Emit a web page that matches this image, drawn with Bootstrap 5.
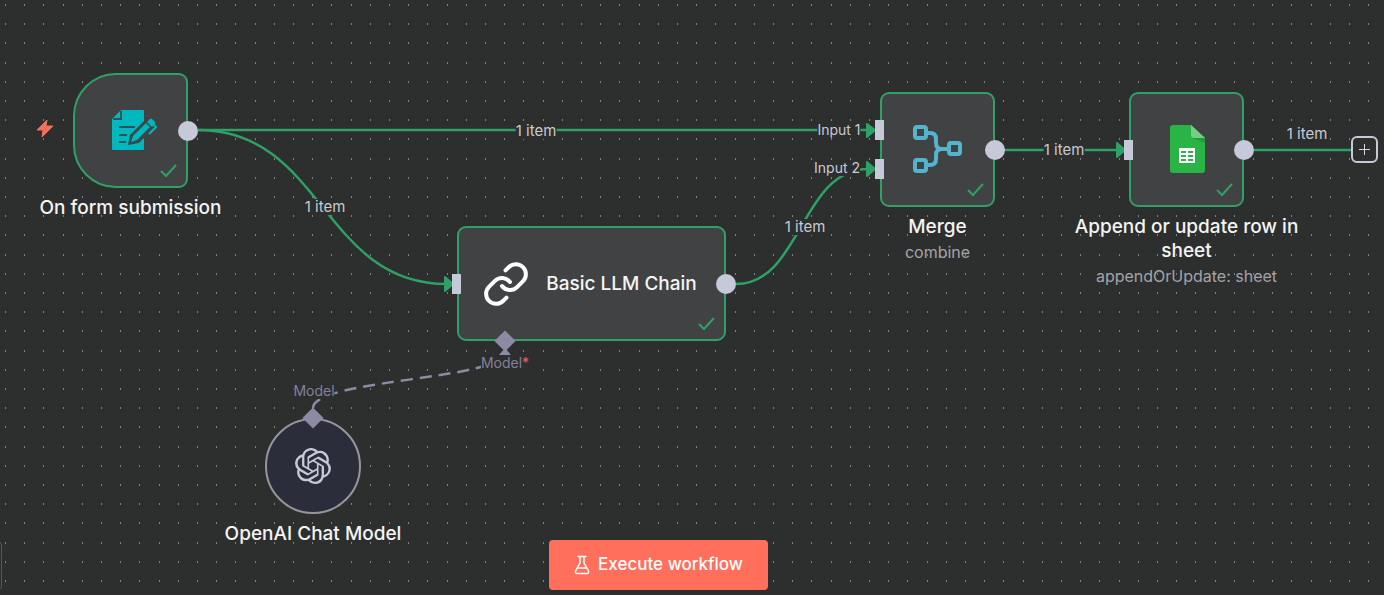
<!DOCTYPE html>
<html lang="en">
<head>
<meta charset="utf-8">
<meta name="viewport" content="width=device-width, initial-scale=1">
<title>Workflow</title>
<link rel="stylesheet" href="https://cdn.jsdelivr.net/npm/bootstrap@5.3.0/dist/css/bootstrap.min.css">
<style>
:root {
  --canvas: #2d2e2e;
  --node: #414244;
  --ok: #31a067;
  --port: #c5c9d8;
  --sub: #8c8ba3;
}
body { background: var(--canvas); color: #f4f4f6; font-family: Inter, "Liberation Sans", sans-serif; }
.flow-canvas { min-height: 595px; }
.wires { pointer-events: none; }
.flow-node { position: absolute; width: 115px; height: 115px; }
.node-face { background: var(--node); border: 2px solid var(--ok); border-radius: 9px; }
.node-trigger .node-face { border-radius: 43px 9px 9px 43px; }
.node-wide { width: 269px; }
.node-round { width: 96px; height: 96px; }
.node-round .node-face { background: #2b2d3b; border-color: #96969c; border-radius: 50%; }
.node-caption { position: absolute; top: 100%; left: 50%; width: 250px; transform: translateX(-50%); padding-top: 8px; text-align: center; }
.node-title { font-size: 19px; line-height: 24px; font-weight: 550; }
.node-note { font-size: 16px; line-height: 26px; color: #a3a4a9; }
.tick { position: absolute; right: 10px; bottom: 10px; }
.port { position: absolute; background: var(--port); }
.port-out { width: 20px; height: 20px; border-radius: 50%; right: -10px; top: 50%; transform: translateY(-50%); }
.port-in { width: 9px; height: 20px; left: -5px; top: 50%; transform: translateY(-50%); }
.port-first { top: 33%; }
.port-second { top: 67%; }
.port-sub { width: 15px; height: 15px; background: var(--sub); transform: translate(-50%, -50%) rotate(45deg); }
.wire-tag { position: absolute; transform: translate(-50%, -50%); background: var(--canvas); color: #c9cad2; font-size: 15px; line-height: 16px; white-space: nowrap; }
.wire-tag.port-tag { font-size: 14px; }
.wire-tag.sub-tag { color: #83819a; }
.need { color: #ff5a5a; }
.bolt { position: absolute; left: 36px; top: 119px; }
.add-next { position: absolute; left: 1351px; top: 136px; width: 27px; height: 27px; border: 2px solid var(--port); border-radius: 6px; background: var(--canvas); }
.run-bar { padding: 0 67px 5px 0; }
.btn-run { --bs-btn-bg: #ff6f5c; --bs-btn-color: #fff; --bs-btn-hover-bg: #f9614d; --bs-btn-hover-color: #fff; --bs-btn-border-width: 0; --bs-btn-border-radius: 4px; width: 219px; height: 50px; font-size: 17px; font-weight: 500; }
.edge-panel { position: absolute; left: -8px; bottom: 5px; width: 10px; height: 49px; border: 1px solid #555657; border-radius: 4px; }
</style>
</head>
<body>
<main class="flow-canvas position-relative vh-100 overflow-hidden d-flex flex-column justify-content-end">
  <svg class="wires position-absolute top-0 start-0 w-100 h-100" aria-hidden="true">
    <defs>
      <pattern id="dots" width="96" height="96" patternUnits="userSpaceOnUse">
        <g id="dotrow" fill="#808181">
          <rect x="5" y="4" width="1" height="2"/><rect x="24" y="4" width="1" height="2"/><rect x="43" y="4" width="1" height="2"/><rect x="63" y="4" width="1" height="2"/><rect x="82" y="4" width="1" height="2"/>
        </g>
        <use href="#dotrow" y="19"/><use href="#dotrow" y="38"/><use href="#dotrow" y="58"/><use href="#dotrow" y="77"/>
      </pattern>
    </defs>
    <rect width="100%" height="100%" fill="url(#dots)"/>
    <g fill="none" stroke="#2fa066" stroke-width="2.500">
      <path d="M198 130H868"/>
      <path d="M198 130C323 130 322 284 447 284"/>
      <path d="M736 284C801 284 801 169 868 169"/>
      <path d="M1004 150H1118"/>
      <path d="M1254 150H1352"/>
    </g>
    <g fill="#2fa066" stroke="#2fa066" stroke-width="2" stroke-linejoin="round">
      <path d="M867 124L875 130L867 137Z"/>
      <path d="M867 162L875 169L867 176Z"/>
      <path d="M1117 143L1125 150L1117 157Z"/>
      <path d="M445 277L453 284L445 291Z"/>
    </g>
    <path d="M313 408C313 379 505 380 505 352" fill="none" stroke="#8c8ba3" stroke-width="2.500" stroke-dasharray="12 7"/>
    <path d="M505 348L511 355H499Z" fill="#8c8ba3"/>
  </svg>

  <span class="wire-tag" style="left:536px;top:131px">1 item</span>
  <span class="wire-tag" style="left:325px;top:207px">1 item</span>
  <span class="wire-tag" style="left:805px;top:227px">1 item</span>
  <span class="wire-tag" style="left:1064px;top:150px">1 item</span>
  <span class="wire-tag" style="left:1307px;top:134px">1 item</span>
  <span class="wire-tag port-tag" style="left:839px;top:130px">Input 1</span>
  <span class="wire-tag port-tag" style="left:837px;top:168px">Input 2</span>
  <span class="wire-tag port-tag sub-tag" style="left:505px;top:363px">Model<span class="need">*</span></span>
  <span class="wire-tag port-tag sub-tag" style="left:314px;top:391px">Model</span>

  <svg class="bolt" width="18" height="19" viewBox="0 0 18 19" aria-hidden="true"><path d="M11 1L1 11H7L6 18L17 7H10Z" fill="#f0705e" stroke="#f0705e" stroke-linejoin="round"/></svg>

  <article class="flow-node node-trigger" style="left:73px;top:73px">
    <div class="node-face w-100 h-100"></div>
    <svg class="position-absolute" style="left:38px;top:36px" width="46" height="42" viewBox="0 0 46 42" aria-hidden="true">
      <path d="M10 1H32Q33 1 33 2V40Q33 41 32 41H2Q1 41 1 40V10Z" fill="#00b8bd"/>
      <path d="M2 10H10V2" fill="none" stroke="#2c5558" stroke-width="2"/>
      <path d="M8 18H24M8 26H16M8 33H15" stroke="#27565a" stroke-width="2"/>
      <path d="M17 36L19 26L35 10L44 18L28 34Z" fill="#304a4d"/>
      <path d="M33 8H46V26H33Z" fill="#414244"/>
      <path d="M20 33L22 27L35 14L39 18L26 31Z" fill="#00b8bd"/>
      <path d="M36 13L39 10Q40 9 41 10L44 13Q45 14 44 15L41 18Z" fill="#00b8bd"/>
      <path d="M43 16L45 18L38 25" fill="none" stroke="#00b8bd" stroke-width="2" stroke-linejoin="round"/>
    </svg>
    <svg class="tick" width="19" height="15" viewBox="0 0 19 15" aria-hidden="true"><path d="M2 8L7 13L17 2" fill="none" stroke="#31a067" stroke-width="2"/></svg>
    <span class="port port-out"></span>
    <div class="node-caption"><div class="node-title">On form submission</div></div>
  </article>

  <article class="flow-node" style="left:880px;top:92px">
    <div class="node-face w-100 h-100"></div>
    <svg class="position-absolute" style="left:32px;top:32px" width="50" height="50" viewBox="0 0 50 50" fill="none" stroke="#54b4cb" stroke-width="4" aria-hidden="true">
      <rect x="3" y="3" width="11" height="11" rx="2"/><rect x="3" y="36" width="11" height="11" rx="2"/><rect x="37" y="19" width="11" height="11" rx="2"/>
      <path d="M14 9H18Q24 9 24 15V19Q24 25 30 25H36M14 41H18Q24 41 24 35V31Q24 25 30 25"/>
    </svg>
    <svg class="tick" width="19" height="15" viewBox="0 0 19 15" aria-hidden="true"><path d="M2 8L7 13L17 2" fill="none" stroke="#31a067" stroke-width="2"/></svg>
    <span class="port port-in port-first"></span><span class="port port-in port-second"></span><span class="port port-out"></span>
    <div class="node-caption"><div class="node-title">Merge</div><div class="node-note">combine</div></div>
  </article>

  <article class="flow-node" style="left:1129px;top:92px">
    <div class="node-face w-100 h-100"></div>
    <svg class="position-absolute" style="left:41px;top:33px" width="35" height="48" viewBox="0 0 35 48" aria-hidden="true">
      <path d="M3 0H21L35 13V45Q35 48 32 48H3Q0 48 0 45V3Q0 0 3 0Z" fill="#2bb446"/>
      <path d="M21 0L35 13H24Q21 13 21 10Z" fill="#74cf84"/><path d="M23 13H35V18Z" fill="#25993e"/>
      <path d="M9 23H25V38H9ZM11 26V28H16V26ZM18 26V28H23V26ZM11 30V32H16V30ZM18 30V32H23V30ZM11 34V36H16V34ZM18 34V36H23V34Z" fill="#fff" fill-rule="evenodd"/>
    </svg>
    <svg class="tick" width="19" height="15" viewBox="0 0 19 15" aria-hidden="true"><path d="M2 8L7 13L17 2" fill="none" stroke="#31a067" stroke-width="2"/></svg>
    <span class="port port-in"></span><span class="port port-out"></span>
    <div class="node-caption"><div class="node-title">Append or update row in sheet</div><div class="node-note">appendOrUpdate: sheet</div></div>
  </article>

  <button class="add-next d-flex align-items-center justify-content-center p-0" type="button" aria-label="Add node">
    <svg width="11" height="11" viewBox="0 0 11 11" aria-hidden="true"><path d="M5.500 0V11M0 5.500H11" stroke="#d6d8e0" stroke-width="1"/></svg>
  </button>

  <article class="flow-node node-wide" style="left:457px;top:226px">
    <div class="node-face w-100 h-100 d-flex align-items-center justify-content-center gap-3 pe-1">
      <svg class="flex-shrink-0" width="48" height="48" viewBox="0 0 24 24" fill="none" stroke="#fff" stroke-width="2" stroke-linecap="round" stroke-linejoin="round" aria-hidden="true"><path d="M10 13a5 5 0 0 0 7.540.540l3-3a5 5 0 0 0-7.070-7.070l-1.720 1.710"/><path d="M14 11a5 5 0 0 0-7.540-.540l-3 3a5 5 0 0 0 7.070 7.070l1.710-1.710"/></svg>
      <div class="node-title">Basic LLM Chain</div>
    </div>
    <svg class="tick" width="19" height="15" viewBox="0 0 19 15" aria-hidden="true"><path d="M2 8L7 13L17 2" fill="none" stroke="#31a067" stroke-width="2"/></svg>
    <span class="port port-in"></span><span class="port port-out"></span>
    <span class="port port-sub" style="left:48px;top:115px"></span>
  </article>

  <article class="flow-node node-round" style="left:265px;top:418px">
    <div class="node-face w-100 h-100 d-flex align-items-center justify-content-center">
      <svg width="36" height="36" viewBox="0 0 24 24" fill="#c5c9d8" aria-hidden="true"><path d="M22.2819 9.8211a5.9847 5.9847 0 0 0-.5157-4.9108 6.0462 6.0462 0 0 0-6.5098-2.9A6.0651 6.0651 0 0 0 4.9807 4.1818a5.9847 5.9847 0 0 0-3.9977 2.9 6.0462 6.0462 0 0 0 .7427 7.0966 5.98 5.98 0 0 0 .511 4.9107 6.051 6.051 0 0 0 6.5146 2.9001A5.9847 5.9847 0 0 0 13.2599 24a6.0557 6.0557 0 0 0 5.7718-4.2058 5.9894 5.9894 0 0 0 3.9977-2.9001 6.0557 6.0557 0 0 0-.7475-7.0729zm-9.022 12.6081a4.4755 4.4755 0 0 1-2.8764-1.0408l.1419-.0804 4.7783-2.7582a.7948.7948 0 0 0 .3927-.6813v-6.7369l2.02 1.1686a.071.071 0 0 1 .038.052v5.5826a4.504 4.504 0 0 1-4.4945 4.4944zm-9.6607-4.1254a4.4708 4.4708 0 0 1-.5346-3.0137l.142.0852 4.783 2.7582a.7712.7712 0 0 0 .7806 0l5.8428-3.3685v2.3324a.0804.0804 0 0 1-.0332.0615L9.74 19.9502a4.4992 4.4992 0 0 1-6.1408-1.6464zM2.3408 7.8956a4.485 4.485 0 0 1 2.3655-1.9728V11.6a.7664.7664 0 0 0 .3879.6765l5.8144 3.3543-2.0201 1.1685a.0757.0757 0 0 1-.071 0l-4.8303-2.7865A4.504 4.504 0 0 1 2.3408 7.872zm16.5963 3.8558L13.1038 8.364 15.1192 7.2a.0757.0757 0 0 1 .071 0l4.8303 2.7913a4.4944 4.4944 0 0 1-.6765 8.1042v-5.6772a.79.79 0 0 0-.407-.667zm2.0107-3.0231l-.142-.0852-4.7735-2.7818a.7759.7759 0 0 0-.7854 0L9.409 9.2297V6.8974a.0662.0662 0 0 1 .0284-.0615l4.8303-2.7866a4.4992 4.4992 0 0 1 6.6802 4.66zM8.3065 12.863l-2.02-1.1638a.0804.0804 0 0 1-.038-.0567V6.0742a4.4992 4.4992 0 0 1 7.3757-3.4537l-.142.0805L8.704 5.459a.7948.7948 0 0 0-.3927.6813zm1.0976-2.3654l2.602-1.4998 2.6069 1.4998v2.9994l-2.5974 1.4997-2.6067-1.4997Z"/></svg>
    </div>
    <span class="port port-sub" style="left:48px;top:0"></span>
    <div class="node-caption"><div class="node-title">OpenAI Chat Model</div></div>
  </article>

  <div class="edge-panel"></div>
  <div class="run-bar position-relative d-flex justify-content-center">
    <button type="button" class="btn btn-run d-flex align-items-center justify-content-center gap-2 p-0">
      <svg width="16" height="20" viewBox="0 0 16 20" fill="none" stroke="#fff" stroke-width="1.500" stroke-linejoin="round" stroke-linecap="round" aria-hidden="true"><path d="M4 1.500H12M6 1.500V8L1.500 16Q1 18.500 3 18.500H13Q15 18.500 14.500 16L10 8V1.500M4 13H12"/></svg>
      Execute workflow
    </button>
  </div>
</main>
<script src="https://cdn.jsdelivr.net/npm/bootstrap@5.3.0/dist/js/bootstrap.bundle.min.js"></script>
</body>
</html>
